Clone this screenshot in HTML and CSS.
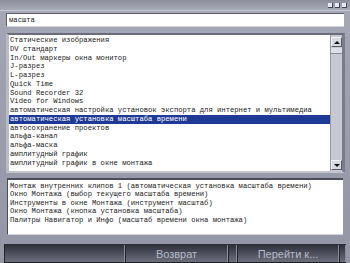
FILE: index.html
```html
<!DOCTYPE html>
<html lang="ru">
<head>
  <meta charset="UTF-8">
  <title>Поиск в справке</title>
  <link rel="stylesheet" href="styles.css">
</head>
<body>
  <div class="window">
    <div class="titlebar">
      <span class="knob"></span><span class="knob"></span><span class="knob"></span>
    </div>
    <div class="search">
      <div class="field">масшта</div>
    </div>
    <div class="list-frame">
      <ul class="list">
        <li>Статические изображения</li>
        <li>DV стандарт</li>
        <li>In/Out маркеры окна монитор</li>
        <li>J-разрез</li>
        <li>L-разрез</li>
        <li>Quick Time</li>
        <li>Sound Recorder 32</li>
        <li>Video for Windows</li>
        <li>автоматическая настройка установок экспорта для интернет и мультимедиа</li>
        <li class="selected">автоматическая установка масштаба времени</li>
        <li>автосохранение проектов</li>
        <li>альфа-канал</li>
        <li>альфа-маска</li>
        <li>амплитудный график</li>
        <li>амплитудный график в окне монтажа</li>
      </ul>
      <div class="scrollbar">
        <div class="arrow up"><span></span></div>
        <div class="thumb"></div>
        <div class="track"></div>
        <div class="arrow down"><span></span></div>
      </div>
    </div>
    <div class="details">
      <div>Монтаж внутренних клипов 1 (автоматическая установка масштаба времени)</div>
      <div>Окно Монтажа (выбор текущего масштаба времени)</div>
      <div>Инструменты в окне Монтажа (инструмент масштаб)</div>
      <div>Окно Монтажа (кнопка установка масштаба)</div>
      <div>Палитры Навигатор и Инфо (масштаб времени окна монтажа)</div>
    </div>
    <div class="buttons">
      <div class="btn blank"></div>
      <div class="btn">Возврат</div>
      <div class="btn stub"></div>
      <div class="btn">Перейти к...</div>
      <div class="btn stub end"></div>
    </div>
  </div>
</body>
</html>
```

FILE: styles.css
```css
html, body {
  margin: 0;
  padding: 0;
  background: #8e90a0;
}
.window {
  width: 350px;
  height: 263px;
  display: flex;
  flex-direction: column;
  background: linear-gradient(180deg, #a6a8b6 0%, #9c9eae 40%, #9496a6 100%);
  font-family: "Liberation Mono", "DejaVu Sans Mono", monospace;
  font-size: 7.2px;
  color: #222;
  overflow: hidden;
}
.titlebar {
  height: 10px;
  display: flex;
  justify-content: flex-end;
  align-items: center;
  gap: 2px;
  padding-right: 3px;
  background: linear-gradient(180deg, #8a8c9a, #a8aab8);
  border-bottom: 1px solid #c4c6d2;
}
.knob {
  width: 4px;
  height: 4px;
  background: #e8e8f0;
  border-right: 1px solid #44465a;
  border-bottom: 1px solid #44465a;
}
.search {
  padding: 2px 6px 0 6px;
}
.field {
  height: 12px;
  line-height: 12px;
  background: #fff;
  padding-left: 2px;
  border-top: 1px solid #5c5e6e;
  border-left: 1px solid #5c5e6e;
  border-bottom: 1px solid #d2d4de;
}
.list-frame {
  margin: 6px 5px 0 6px;
  height: 136px;
  display: flex;
  background: #fff;
  border-top: 2px solid #6a6c7c;
  border-left: 3px solid #b8bac6;
  border-right: 3px solid #7a7c8c;
  border-bottom: 2px solid #c2c4d0;
}
.list {
  list-style: none;
  margin: 0;
  padding: 1px 0 0 0;
  flex: 1;
  overflow: hidden;
}
.list li {
  height: 8.75px;
  line-height: 8.75px;
  padding-left: 1px;
  white-space: nowrap;
}
.list li.selected {
  background: #1f3a94;
  color: #fff;
}
.scrollbar {
  width: 11px;
  display: flex;
  flex-direction: column;
  background: #c6c8d2;
  border-left: 1px solid #9698a6;
}
.arrow {
  height: 8px;
  display: flex;
  align-items: center;
  justify-content: center;
  background: #d8dae2;
  border-right: 1px solid #5a5c6a;
  border-bottom: 1px solid #5a5c6a;
  border-top: 1px solid #f4f4f8;
  border-left: 1px solid #f4f4f8;
}
.arrow span {
  width: 0;
  height: 0;
  border-left: 3px solid transparent;
  border-right: 3px solid transparent;
}
.arrow.up { margin-top: 2px; }
.arrow.up span { border-bottom: 3px solid #111; }
.arrow.down span { border-top: 3px solid #111; }
.arrow.down { margin-bottom: 1px; }
.thumb {
  height: 5px;
  margin-top: 1px;
  background: #dcdee6;
  border-bottom: 1px solid #8a8c9a;
}
.track { flex: 1; }
.details {
  margin: 5px 7px 0 7px;
  height: 57px;
  background: #fff;
  padding: 2px 0 0 2px;
  border-top: 2px solid #4a4c5c;
  border-left: 1px solid #4a4c5c;
  border-bottom: 1px solid #d0d2dc;
  box-sizing: border-box;
}
.details div {
  height: 8.4px;
  line-height: 8.4px;
  white-space: nowrap;
}
.buttons {
  margin: 9px 4px 0 4px;
  height: 17px;
  display: flex;
  border-top: 1px solid #2c2e3a;
  border-bottom: 1px solid #1c1e26;
}
.btn {
  display: flex;
  align-items: center;
  justify-content: center;
  background: linear-gradient(180deg, #2e303c 0%, #4a4c5a 45%, #6c6e7c 100%);
  border-right: 1px solid #8a8c9c;
  border-left: 1px solid #24262e;
  color: #b8bac8;
  font-family: "Liberation Sans", Arial, sans-serif;
  font-size: 11px;
}
.btn.blank { width: 119px; }
.btn:nth-child(2) { width: 101px; }
.btn.stub { width: 7px; }
.btn:nth-child(4) { width: 100px; }
.btn.end { flex: 1; }
```
